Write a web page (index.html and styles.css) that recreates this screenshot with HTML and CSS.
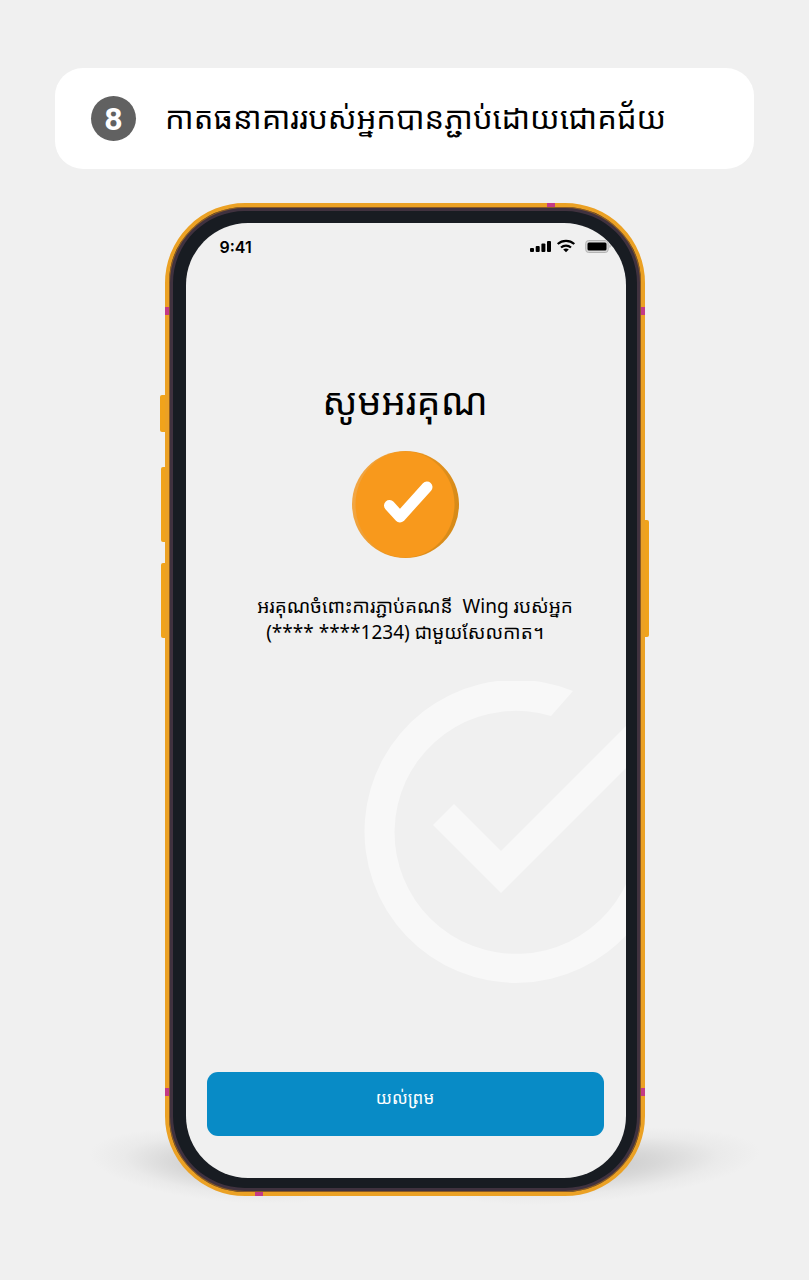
FILE: index.html
```html
<!DOCTYPE html>
<html lang="km">
<head>
<meta charset="utf-8">
<meta name="viewport" content="width=device-width, initial-scale=1">
<title>សូមអរគុណ</title>
<link rel="stylesheet" href="styles.css">
</head>
<body>
<main class="page">
  <header class="step">
    <span class="step-number">8</span>
    <h1 class="step-title">កាតធនាគាររបស់អ្នកបានភ្ជាប់ដោយជោគជ័យ</h1>
  </header>

  <div class="phone">
    <span class="shadow shadow-left"></span>
    <span class="shadow shadow-right"></span>
    <span class="key key-mute"></span>
    <span class="key key-up"></span>
    <span class="key key-down"></span>
    <span class="key key-power"></span>
    <div class="frame">
      <span class="band band-top"></span>
      <span class="band band-left-high"></span>
      <span class="band band-right-high"></span>
      <span class="band band-left-low"></span>
      <span class="band band-right-low"></span>
      <span class="band band-bottom"></span>
      <section class="screen">
        <svg class="watermark" viewBox="0 0 304 304" aria-hidden="true">
          <path d="M209 10A151.500 151.500 0 1 0 303 163H273A121.500 121.500 0 1 1 187 35Z"/>
          <path d="M69 144 90 123 137 170 282 25 303 46 137 212Z"/>
        </svg>
        <div class="status">
          <span class="time">9:41</span>
          <svg class="status-icons" viewBox="0 0 82 16" aria-hidden="true">
            <rect x="0" y="9" width="4" height="4" rx="1"/>
            <rect x="5.700" y="7" width="4" height="6" rx="1"/>
            <rect x="11.400" y="4.500" width="4" height="8.500" rx="1"/>
            <rect x="17" y="2" width="4" height="11" rx="1"/>
            <g fill="none" stroke="#000" stroke-width="2.200">
              <path d="M27.700 5A12.500 12.500 0 0 1 44.300 5"/>
              <path d="M31 8.500A7.500 7.500 0 0 1 41 8.500"/>
            </g>
            <path d="M33.200 10.500Q36 8.300 38.800 10.500L36 13.300Z"/>
            <rect x="55.700" y="1.500" width="22.500" height="12" rx="3" fill="#d8d8d8" stroke="#b4b4b4"/>
            <rect x="57.500" y="3.500" width="19" height="8" rx="1.500"/>
            <path d="M79.500 5.500Q82 7.200 79.500 9Z" fill="#aaa"/>
          </svg>
        </div>
        <h2 class="thanks">សូមអរគុណ</h2>
        <svg class="badge" viewBox="0 0 107 107" aria-hidden="true">
          <defs>
            <linearGradient id="rim" x1="0" y1="0.400" x2="1" y2="0.600">
              <stop offset="0" stop-color="#f2a644"/>
              <stop offset="0.500" stop-color="#e8941f"/>
              <stop offset="1" stop-color="#d68a18"/>
            </linearGradient>
          </defs>
          <circle cx="53.500" cy="53.500" r="53.500" fill="url(#rim)"/>
          <ellipse cx="53" cy="53.500" rx="49.500" ry="53" fill="#f8991c"/>
          <path d="M37.500 54.500 48 66 75 36" fill="none" stroke="#fff" stroke-width="11" stroke-linecap="round" stroke-linejoin="round"/>
        </svg>
        <p class="message">
          <span class="line line-first">អរគុណចំពោះការភ្ជាប់គណនី&nbsp; Wing របស់អ្នក</span>
          <span class="line">(**** ****1234) ជាមួយសែលកាត។</span>
        </p>
        <button class="agree" type="button">យល់ព្រម</button>
      </section>
    </div>
  </div>
</main>
</body>
</html>
```
FILE: styles.css
```css
* {
  box-sizing: border-box;
}

body {
  margin: 0;
  background: #f0f0f0;
  color: #000;
  font-family: "Noto Sans", "Noto Sans Khmer", sans-serif;
}

.page {
  display: flex;
  flex-direction: column;
  gap: 34px;
  padding: 68px 55px 84px;
}

.step {
  display: flex;
  align-items: center;
  gap: 29px;
  min-height: 101px;
  padding: 16px 36px;
  border-radius: 28px;
  background: #fff;
}

.step-number {
  display: grid;
  place-items: center;
  flex: none;
  width: 45px;
  height: 45px;
  border-radius: 50%;
  background: #616161;
  color: #fff;
  font: 700 32px/1 Roboto, sans-serif;
}

.step-title {
  margin: 0;
  padding-bottom: 4px;
  font-size: 31px;
  font-weight: 400;
  line-height: 48px;
}

.phone {
  position: relative;
  width: 100%;
  max-width: 480px;
  margin: 0 auto;
}

.frame {
  position: relative;
  display: flex;
  aspect-ratio: 480 / 993;
  padding: 14px;
  border: 4px solid #eba124;
  border-radius: 80px;
  background: #181c22;
  box-shadow: inset 0 0 0 1px #8a5a24, inset 0 0 0 4px #40323f;
}

.screen {
  position: relative;
  display: flex;
  flex: 1;
  flex-direction: column;
  align-items: center;
  margin: 2px 1px 0 3px;
  padding: 12px 22px 42px 21px;
  overflow: hidden;
  border-radius: 62px;
  background: #f0f0f0;
}

.watermark {
  position: absolute;
  top: 458px;
  left: 178px;
  width: 304px;
  fill: #f8f8f8;
}

.status {
  position: relative;
  display: flex;
  align-items: center;
  justify-content: space-between;
  align-self: stretch;
  height: 24px;
  margin: 0 -8px 0 13px;
}

.time {
  font: 600 16px/24px Inter, sans-serif;
}

.status-icons {
  width: 82px;
  height: 16px;
}

.thanks {
  margin: 109px 0 0;
  font-size: 38px;
  font-weight: 400;
  line-height: 64px;
}

.badge {
  width: 107px;
  height: 107px;
  margin-top: 19px;
}

.message {
  position: relative;
  margin: 35px 0 24px;
  font-size: 19px;
  line-height: 26px;
  text-align: center;
}

.line {
  display: block;
}

.line-first {
  padding-left: 20px;
}

.agree {
  position: relative;
  align-self: stretch;
  height: 64px;
  margin-top: auto;
  padding: 0 0 14px;
  border: 0;
  border-radius: 11px;
  background: #088bc6;
  color: #fff;
  font: inherit;
  font-size: 17px;
}

.key {
  position: absolute;
  left: -4px;
  width: 5px;
  border-radius: 2px 0 0 2px;
  background: #f0a31b;
}

.key-mute {
  top: 192px;
  left: -5px;
  height: 37px;
}

.key-up {
  top: 264px;
  height: 75px;
}

.key-down {
  top: 360px;
  height: 75px;
}

.key-power {
  top: 317px;
  right: -4px;
  left: auto;
  height: 117px;
  border-radius: 0 2px 2px 0;
}

.band {
  position: absolute;
  width: 4px;
  height: 8px;
  background: #c43a86;
}

.band-top,
.band-bottom {
  width: 8px;
  height: 4px;
}

.band-top {
  top: -4px;
  right: 86px;
}

.band-bottom {
  bottom: -4px;
  left: 86px;
}

.band-left-high {
  top: 100px;
  left: -4px;
}

.band-right-high {
  top: 100px;
  right: -4px;
}

.band-left-low {
  bottom: 96px;
  left: -4px;
}

.band-right-low {
  right: -4px;
  bottom: 96px;
}

.shadow {
  position: absolute;
  bottom: -6px;
  width: 280px;
  height: 72px;
  background: radial-gradient(closest-side, #c8c8c8, #d8d8d8 40%, #eaeaea 75%, #f0f0f0);
}

.shadow-left {
  left: -76px;
  transform: rotate(5deg);
}

.shadow-right {
  right: -116px;
  width: 340px;
  transform: rotate(-5deg);
}
```
